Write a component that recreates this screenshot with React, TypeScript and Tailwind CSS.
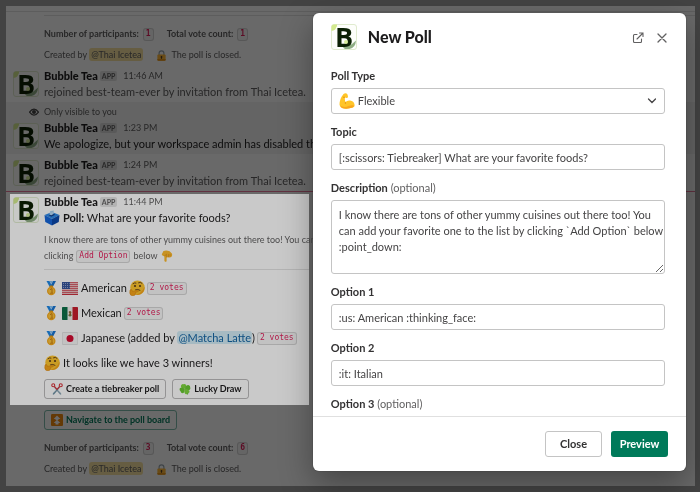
import React from "react";
import type { ReactNode } from "react";

function Svg({ box = "0 0 32 32", className = "size-4", children }: { box?: string; className?: string; children: ReactNode }) {
  return (
    <svg viewBox={box} className={`inline-block shrink-0 ${className}`} aria-hidden="true">
      {children}
    </svg>
  );
}

function Logo() {
  return (
    <Svg box="0 0 26 26" className="size-[26px] overflow-visible">
      <rect x=".5" y=".5" width="25" height="25" rx="2.5" fill="#fdfefb" stroke="#e0ebcf" />
      <path d="M.5 6V3Q.5.5 3 .5H6Q6.500 2.500 5 3.500Q5 6 .5 7Z" fill="#d3ea8e" />
      <path d="M12 23.500Q16 21 17.500 18.500L20.500 20.500 25 16.500Q24.500 24 18.500 25H14Z" fill="#8fae85" />
      <text x="4" y="22.500" fontSize="27" fontWeight="700" fill="#0b2003" fontFamily="'Open Sans', sans-serif">
        B
      </text>
      <circle cx="15" cy="18" r="2" fill="#d9ee9c" />
    </Svg>
  );
}

function Lock() {
  return (
    <Svg className="size-[11px]">
      <path d="M9 15V9.500a7 7 0 0 1 14 0V15" fill="none" stroke="#9aa7b0" strokeWidth="3.500" />
      <rect x="4" y="13" width="24" height="18" rx="3" fill="#ffb636" />
      <path d="M4 26h24v2q0 3-3 3H7q-3 0-3-3z" fill="#e8951c" />
      <circle cx="16" cy="20" r="2.500" fill="#4a3a20" />
      <path d="M15 20h2v6h-2z" fill="#4a3a20" />
    </Svg>
  );
}

function BallotBox() {
  return (
    <Svg>
      <path d="M1 10 16 4l15 6-15 8z" fill="#2f8ae8" />
      <path d="M1 10l15 8v13L2.500 24z" fill="#1565d8" />
      <path d="M31 10 16 18v13l13.500-7z" fill="#0a47a9" />
      <path d="m9.500 10.500 8-3.500 5 2.500-8 4z" fill="#123f8c" />
      <path d="m11 9 1-7 8-1-1 7-4.500 2.500z" fill="#b9dcf8" />
      <path d="m13 4 5-.8" stroke="#8fb6dd" />
    </Svg>
  );
}

function PointDown() {
  return (
    <Svg className="size-3">
      <path d="M6 3Q13-1 23 3l6 6q2 5-1 9l-4 2-9-1v10q-1 3-4 2-2-1-2-3V17l-6-3Q1 11 4 8z" fill="#fcb92d" />
      <path d="M15 12v8m5-9v8m4-8v6M9 15q5 0 6-5" stroke="#d98716" strokeWidth="1.500" fill="none" />
    </Svg>
  );
}

function Medal() {
  return (
    <Svg>
      <path d="M5 2h6l5 10-4 3z" fill="#1e88e5" />
      <path d="M24 2h-6l-5 10 4 3z" fill="#1976d2" />
      <path d="M11 2h7l-3.500 6z" fill="#84c3f5" />
      <rect x="11" y="11" width="7" height="4" rx="1.500" fill="#e89b13" />
      <circle cx="14.500" cy="22" r="8.500" fill="#f5a81c" />
      <circle cx="14.500" cy="22" r="6" fill="#fcc43d" />
      <path d="m12 19.500 2.500-2H16v9" fill="none" stroke="#c77909" strokeWidth="2" />
      <path d="M12 26.500h6" stroke="#c77909" strokeWidth="1.500" />
    </Svg>
  );
}

function FlagUS() {
  return (
    <Svg box="0 0 32 26" className="h-[13px] w-4">
      <rect width="32" height="26" rx="1.500" fill="#f3efef" />
      <path d="M0 1.500h32M0 5.500h32M0 9.500h32M0 13.500h32M0 17.500h32M0 21.500h32M0 25h32" stroke="#c9303e" strokeWidth="2" />
      <rect width="16" height="14" fill="#37559c" />
      <path d="M2 3h13M2 7h13M2 11h13" stroke="#dbe2f3" strokeDasharray="1.500 2.500" strokeWidth="1.500" />
    </Svg>
  );
}

function FlagMexico() {
  return (
    <Svg box="0 0 32 26" className="h-[13px] w-4">
      <rect width="32" height="26" rx="1.500" fill="#f1f1ee" />
      <path d="M1.500 0H11v26H1.500Q0 26 0 24.500v-23Q0 0 1.500 0" fill="#0b7048" />
      <path d="M21 0h9.500Q32 0 32 1.500v23q0 1.500-1.500 1.500H21z" fill="#c81f2d" />
      <path d="M13 10q3-4 6 0l-1 4 1 3q-3 2-6 0l2-4z" fill="#8a6a35" />
      <path d="M12.500 15q1 4 3.500 4t3.500-4" fill="none" stroke="#4c8a4f" />
    </Svg>
  );
}

function FlagJapan() {
  return (
    <Svg box="0 0 32 26" className="h-[13px] w-4">
      <rect x=".5" y="1" width="31" height="24" rx="1.500" fill="#f6f6f6" stroke="#c8c8c8" />
      <circle cx="16" cy="13" r="7" fill="#d30c31" />
    </Svg>
  );
}

function Thinking() {
  return (
    <Svg>
      <circle cx="17" cy="15.500" r="14.500" fill="#ffc52e" />
      <path d="M31 14a14.500 14.500 0 0 1-19 15q12 0 19-15" fill="#f5a31c" />
      <circle cx="12" cy="12" r="2.200" fill="#5a3b1c" />
      <circle cx="22" cy="12" r="2.200" fill="#5a3b1c" />
      <path d="M8 7.500q3-3 6-1.500M19 5.500q4-2.500 7 1M13 19.500q5-2 9 1" fill="none" stroke="#5a3b1c" strokeWidth="1.800" strokeLinecap="round" />
      <path d="M2 20q2-3 4 0l1 3 10-2.500q3 0 1.500 2.500L13 25q1 6-4.500 6.500Q2 32 1.500 26z" fill="#f7a41a" stroke="#d98410" />
    </Svg>
  );
}

function ScissorsEmoji() {
  return (
    <Svg className="size-3">
      <path d="M10 10 27 27q1 4-1 4-3-1-5-4L8 12z" fill="#8fa9b8" />
      <path d="M22 10 5 27q-1 4 1 4 3-1 5-4l13-15z" fill="#7596a8" />
      <circle cx="6" cy="6" r="4" fill="none" stroke="#d8343b" strokeWidth="3" />
      <circle cx="26" cy="6" r="4" fill="none" stroke="#d8343b" strokeWidth="3" />
      <path d="m9 9 7 8 7-8" stroke="#d8343b" strokeWidth="3.500" fill="none" />
    </Svg>
  );
}

function Clover() {
  return (
    <Svg className="size-3">
      <path d="M16 16q2 8 8 14" stroke="#4aa32a" strokeWidth="3" fill="none" />
      <path d="M15 15Q4 14 5 7q2-5 7-4 5-2 7 3 2 5-4 10" fill="#7ed63f" />
      <path d="M16 15q1-10 9-10 6 2 5 7 2 5-3 7-7 1-11-4" fill="#68c733" />
      <path d="M15 15Q7 9 2 14q-2 5 2 8 1 5 6 5 6-2 5-12" fill="#68c733" />
      <path d="M16 16q-4 9 1 13 5 2 7-2 5-1 4-6-3-5-12-5" fill="#7ed63f" />
    </Svg>
  );
}

function FastUp() {
  return (
    <Svg className="size-3">
      <rect width="32" height="32" rx="3" fill="#f58a0b" />
      <path d="m16 4 9 9H7zM16 15l9 9H7z" fill="#fff" />
      <path d="M12 23h8v5h-8zM12 12h8v4h-8z" fill="#fff" />
    </Svg>
  );
}

function Biceps({ className }: { className: string }) {
  return (
    <Svg className={className}>
      <path
        d="M9 2q5-3 8 1l1 4q0 3-3 3l-3-1q-1 5 1 9 4-4 9-3 8 1 9 8 1 5-3 6-8 3-18 2-8-1-9-8Q1 12 9 2"
        fill="#ffc529"
      />
      <path d="M2 25q8 5 17 1 6-2 11-1-1 3-3 4-9 3-17 2-6-1-8-6" fill="#f9a51c" />
      <path d="M12 9q-2-2-4 0M13 18q-1 2 0 4" stroke="#e08a12" strokeWidth="1.500" fill="none" />
    </Svg>
  );
}

function Code({ children }: { children: ReactNode }) {
  return (
    <code className="inline-flex h-[13px] items-center rounded-[3px] border border-[#1d1c1d]/15 bg-[#1d1c1d]/4 px-[2px] font-['DejaVu_Sans_Mono',monospace] text-[8px] text-[#e01e5a]">
      {children}
    </code>
  );
}

function MessageHead({ time }: { time: string }) {
  return (
    <div className="flex h-4 items-center">
      <span className="font-black text-[#1d1c1d]">Bubble Tea</span>
      <span className="ml-[2px] flex h-[10px] items-center rounded-[2px] bg-[#1d1c1d]/13 px-[2px] text-[7px] font-bold text-[#616061]">
        APP
      </span>
      <time className="ml-[6px] text-[9px] text-[#616061]">{time}</time>
    </div>
  );
}

function Message({ time, children }: { time: string; children: ReactNode }) {
  return (
    <article className="flex gap-[5px] whitespace-nowrap">
      <div className="flex pt-[3px]">
        <Logo />
      </div>
      <div className="min-w-0 flex-1">
        <MessageHead time={time} />
        {children}
      </div>
    </article>
  );
}

function PollStats({ people, votes }: { people: number; votes: number }) {
  return (
    <div className="ml-[38px] flex flex-col gap-[5px] text-[9px] whitespace-nowrap text-[#616061]">
      <div className="flex h-4 items-center gap-[13px] font-bold">
        <span className="flex items-center gap-1">
          Number of participants: <Code>{people}</Code>
        </span>
        <span className="flex items-center gap-1">
          Total vote count: <Code>{votes}</Code>
        </span>
      </div>
      <div className="flex h-4 items-center gap-[13px]">
        <span>
          Created by{" "}
          <a href="#thai" className="rounded-[3px] bg-[#f2c744]/50 px-[2px] py-px">
            @Thai Icetea
          </a>
        </span>
        <span className="flex items-center gap-1">
          <Lock /> The poll is closed.
        </span>
      </div>
    </div>
  );
}

function Winner({ flag, children }: { flag: ReactNode; children: ReactNode }) {
  return (
    <li className="flex h-4 items-center gap-[2px]">
      <Medal />
      {flag}
      {children}
    </li>
  );
}

function ChatButton({ icon, green = false, children }: { icon: ReactNode; green?: boolean; children: ReactNode }) {
  return (
    <button
      type="button"
      className={`flex h-5 items-center gap-[3px] rounded-[3px] border px-[6px] text-[9px] font-bold ${
        green ? "border-[#007a5a]/50 text-[#007a5a]" : "border-[#1d1c1d]/30 text-[#1d1c1d]"
      }`}
    >
      {icon}
      {children}
    </button>
  );
}

function Field({ id, label, optional = false, children }: { id: string; label: string; optional?: boolean; children?: ReactNode }) {
  return (
    <div className="flex shrink-0 flex-col gap-1">
      <label htmlFor={id} className="font-bold text-[#333233]">
        {label}
        {optional && <span className="font-normal text-[#616061]"> (optional)</span>}
      </label>
      {children}
    </div>
  );
}

const control = "block w-full rounded-[3px] border border-[#c4c4c4] bg-white text-[#454445]";

const description = [
  "I know there are tons of other yummy cuisines out there too! You",
  "can add your favorite one to the list by clicking `Add Option` below",
  ":point_down:",
].join("\n");

function PollDialog() {
  return (
    <div className="fixed inset-0 flex justify-end pt-[13px] pr-[14px] pb-[21px]">
      <section
        role="dialog"
        aria-labelledby="dialog-title"
        className="flex w-[54.4%] flex-col overflow-hidden rounded-md bg-white shadow-[0_0_0_1px_rgba(29,28,29,0.13),0_12px_32px_rgba(0,0,0,0.35)]"
      >
        <header className="flex h-12 shrink-0 items-center pr-4 pl-[18px]">
          <Logo />
          <h1 id="dialog-title" className="ml-[11px] flex-1 text-base font-black">
            New Poll
          </h1>
          <button type="button" aria-label="Open in a new window" className="p-[2px] text-[#616061]">
            <Svg box="0 0 12 12" className="block size-3">
              <path
                d="M5 2.500H2.500q-1 0-1 1v6q0 1 1 1h6q1 0 1-1V7M7.500 1H11v3.500M11 1 5 7"
                fill="none"
                stroke="currentColor"
                strokeWidth="1.100"
                strokeLinecap="round"
              />
            </Svg>
          </button>
          <button type="button" aria-label="Dismiss" className="ml-2 p-[2px] text-[#616061]">
            <Svg box="0 0 12 12" className="block size-3">
              <path d="m2 2 8 8m0-8-8 8" fill="none" stroke="currentColor" strokeWidth="1.300" strokeLinecap="round" />
            </Svg>
          </button>
        </header>
        <form className="flex min-h-0 flex-1 flex-col gap-[10px] overflow-hidden pt-[7px] pr-[21px] pl-[18px] leading-4">
          <Field id="type" label="Poll Type">
            <div className="relative">
              <select id="type" className={`${control} h-[26px] appearance-none pl-[26px]`} defaultValue="Flexible">
                <option>Flexible</option>
              </select>
              <Biceps className="pointer-events-none absolute top-[5px] left-2 size-4" />
              <Svg box="0 0 10 10" className="pointer-events-none absolute top-2 right-2 size-[10px]">
                <path d="m1.500 3 3.500 3.500L8.500 3" fill="none" stroke="#454445" strokeWidth="1.300" strokeLinecap="round" />
              </Svg>
            </div>
          </Field>
          <Field id="topic" label="Topic">
            <input id="topic" className={`${control} h-[26px] px-[7px]`} defaultValue="[:scissors: Tiebreaker] What are your favorite foods?" />
          </Field>
          <Field id="description" label="Description" optional>
            <textarea
              id="description"
              className={`${control} h-[74px] resize overflow-hidden py-[6px] pl-[7px] whitespace-pre`}
              defaultValue={description}
            />
          </Field>
          <Field id="option1" label="Option 1">
            <input id="option1" className={`${control} h-[26px] px-[7px]`} defaultValue=":us: American :thinking_face:" />
          </Field>
          <Field id="option2" label="Option 2">
            <input id="option2" className={`${control} h-[26px] px-[7px]`} defaultValue=":it: Italian" />
          </Field>
          <Field id="option3" label="Option 3" optional>
            <input id="option3" className={`${control} h-[26px] px-[7px]`} />
          </Field>
        </form>
        <footer className="flex shrink-0 justify-end gap-[9px] border-t border-[#e0e0e0] px-[18px] py-[14px] font-bold">
          <button type="button" className="h-[26px] w-[57px] rounded-[3px] border border-[#c4c4c4] text-[#333233]">
            Close
          </button>
          <button type="submit" className="h-[26px] w-[57px] rounded-[3px] bg-[#007a5a] text-white">
            Preview
          </button>
        </footer>
      </section>
    </div>
  );
}

export default function App() {
  return (
    <div className="min-h-screen overflow-hidden bg-[#434343] pt-[6px] pr-[5px] pb-[6px] pl-[6px] font-['Lato','Noto_Sans',sans-serif] text-[11px] text-[#1d1c1d]">
      <main className="overflow-hidden bg-[#696969]">
        <section className="bg-white brightness-[.41]">
          <div className="h-[6px] border-b border-[#1d1c1d]/13" />
          <hr className="mt-[3px] mb-[10px] ml-[38px] border-[#1d1c1d]/13" />
          <PollStats people={1} votes={1} />
          <div className="pt-[5px] pb-[2px] pl-[7px] leading-4 text-[#616061]">
            <Message time="11:46 AM">rejoined best-team-ever by invitation from Thai Icetea.</Message>
          </div>
          <div className="bg-[#f4f4f4] py-[2px] pl-[7px] leading-4">
            <div className="flex h-4 items-center gap-[5px] text-[9px] text-[#616061]">
              <div className="flex w-[26px] justify-end">
                <Svg box="0 0 20 20" className="size-[10px]">
                  <path d="M1 10q9-12 18 0-9 12-18 0z" fill="none" stroke="#454445" strokeWidth="2.500" />
                  <circle cx="10" cy="10" r="4" fill="#454445" />
                </Svg>
              </div>
              Only visible to you
            </div>
            <Message time="1:23 PM">We apologize, but your workspace admin has disabled this feature.</Message>
          </div>
          <div className="border-b border-[#e01e5a]/60 pt-[3px] pb-[2px] pl-[7px] leading-4 text-[#616061]">
            <Message time="1:24 PM">rejoined best-team-ever by invitation from Thai Icetea.</Message>
          </div>
        </section>

        <section className="mt-[2px] ml-1 w-[43.4%] bg-white pb-[6px] pl-[3px] leading-4 brightness-[.79]">
          <Message time="11:44 PM">
            <div className="flex h-4 items-center gap-[3px]">
              <BallotBox />
              <span>
                <b>Poll:</b> What are your favorite foods?
              </span>
            </div>
            <div className="mt-[6px] text-[9px] leading-4 text-[#616061]">
              <p>I know there are tons of other yummy cuisines out there too! You can add</p>
              <p className="flex h-4 items-center gap-[3px]">
                clicking <Code>Add Option</Code> below <PointDown />
              </p>
            </div>
            <hr className="mt-[5px] border-[#1d1c1d]/13" />
            <ul className="mt-[10px] flex flex-col gap-[9px]">
              <Winner flag={<FlagUS />}>
                <span className="pl-px">American</span> <Thinking /> <Code>2 votes</Code>
              </Winner>
              <Winner flag={<FlagMexico />}>
                <span className="pl-px">Mexican</span> <Code>2 votes</Code>
              </Winner>
              <Winner flag={<FlagJapan />}>
                <span className="pl-px">
                  Japanese (added by{" "}
                  <a href="#matcha" className="rounded-[3px] bg-[#1d9bd1]/20 px-px text-[#1264a3]">
                    @Matcha Latte
                  </a>
                  )
                </span>
                <Code>2 votes</Code>
              </Winner>
              <li className="flex h-4 items-center gap-[3px]">
                <Thinking /> It looks like we have 3 winners!
              </li>
            </ul>
            <div className="mt-2 flex gap-[6px]">
              <ChatButton icon={<ScissorsEmoji />}>Create a tiebreaker poll</ChatButton>
              <ChatButton icon={<Clover />}>Lucky Draw</ChatButton>
            </div>
          </Message>
        </section>

        <section className="bg-white pt-[5px] pb-[9px] brightness-[.41]">
          <div className="mb-[10px] ml-[38px] flex">
            <ChatButton green icon={<FastUp />}>
              Navigate to the poll board
            </ChatButton>
          </div>
          <PollStats people={3} votes={6} />
        </section>
      </main>
      <PollDialog />
    </div>
  );
}
